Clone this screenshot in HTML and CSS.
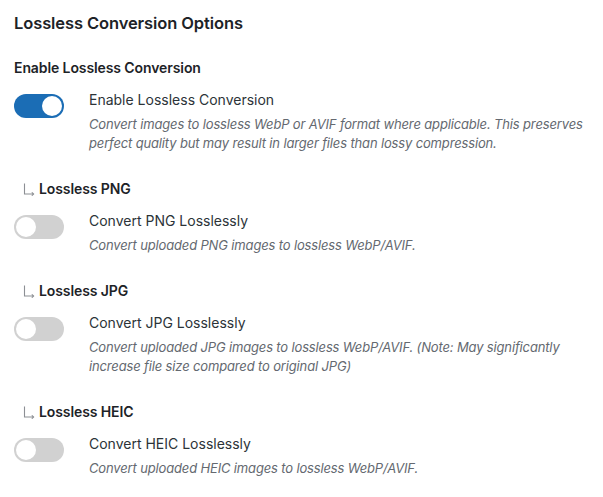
FILE: index.html
```html
<!DOCTYPE html>
<html lang="en">
<head>
<meta charset="utf-8">
<title>Lossless Conversion Options</title>
<link rel="stylesheet" href="styles.css">
</head>
<body>
<div class="page">
  <h2 class="title">Lossless Conversion Options</h2>

  <section class="group">
    <h3 class="group-heading">Enable Lossless Conversion</h3>
    <div class="row">
      <span class="toggle is-on"><span class="knob"></span></span>
      <div class="text">
        <div class="label">Enable Lossless Conversion</div>
        <p class="desc">Convert images to lossless WebP or AVIF format where applicable. This preserves perfect quality but may result in larger files than lossy compression.</p>
      </div>
    </div>
  </section>

  <section class="group">
    <h3 class="group-heading"><svg class="sub-arrow" width="12" height="13" viewBox="0 0 12 13"><path d="M1.5 0.5V11H10.5" fill="none" stroke="#8c8f94" stroke-width="1.1"/><path d="M8.8 9.3L10.6 11L8.8 12.7" fill="none" stroke="#8c8f94" stroke-width="1.1"/></svg>Lossless PNG</h3>
    <div class="row">
      <span class="toggle"><span class="knob"></span></span>
      <div class="text">
        <div class="label">Convert PNG Losslessly</div>
        <p class="desc">Convert uploaded PNG images to lossless WebP/AVIF.</p>
      </div>
    </div>
  </section>

  <section class="group">
    <h3 class="group-heading"><svg class="sub-arrow" width="12" height="13" viewBox="0 0 12 13"><path d="M1.5 0.5V11H10.5" fill="none" stroke="#8c8f94" stroke-width="1.1"/><path d="M8.8 9.3L10.6 11L8.8 12.7" fill="none" stroke="#8c8f94" stroke-width="1.1"/></svg>Lossless JPG</h3>
    <div class="row">
      <span class="toggle"><span class="knob"></span></span>
      <div class="text">
        <div class="label">Convert JPG Losslessly</div>
        <p class="desc">Convert uploaded JPG images to lossless WebP/AVIF. (Note: May significantly increase file size compared to original JPG)</p>
      </div>
    </div>
  </section>

  <section class="group">
    <h3 class="group-heading"><svg class="sub-arrow" width="12" height="13" viewBox="0 0 12 13"><path d="M1.5 0.5V11H10.5" fill="none" stroke="#8c8f94" stroke-width="1.1"/><path d="M8.8 9.3L10.6 11L8.8 12.7" fill="none" stroke="#8c8f94" stroke-width="1.1"/></svg>Lossless HEIC</h3>
    <div class="row">
      <span class="toggle"><span class="knob"></span></span>
      <div class="text">
        <div class="label">Convert HEIC Losslessly</div>
        <p class="desc">Convert uploaded HEIC images to lossless WebP/AVIF.</p>
      </div>
    </div>
  </section>
</div>
</body>
</html>
```

FILE: styles.css
```css
html, body {
  margin: 0;
  padding: 0;
  background: #ffffff;
}

body {
  font-family: Inter, "Noto Sans", "Liberation Sans", sans-serif;
  color: #1d2327;
  -webkit-font-smoothing: antialiased;
}

.page {
  padding: 11px 8px 0 14px;
}

.title {
  margin: 0 0 23px 0;
  font-size: 16.5px;
  line-height: 24px;
  font-weight: 600;
  letter-spacing: -0.1px;
  color: #1d2327;
}

.group {
  margin-bottom: 26px;
}

.group-heading {
  display: flex;
  align-items: center;
  margin: 0 0 12px 0;
  font-size: 14px;
  line-height: 20px;
  font-weight: 600;
  letter-spacing: -0.1px;
  color: #1d2327;
}

.sub-arrow {
  flex: none;
  margin-left: 9px;
  margin-right: 4px;
}

.row {
  display: flex;
  align-items: flex-start;
  gap: 25px;
}

.toggle {
  flex: none;
  position: relative;
  width: 50px;
  height: 24px;
  margin-top: 4px;
  border-radius: 12px;
  background: #d1d1d1;
}

.toggle .knob {
  position: absolute;
  top: 2px;
  left: 2px;
  width: 20px;
  height: 20px;
  border-radius: 50%;
  background: #ffffff;
}

.toggle.is-on {
  background: #1b6db5;
}

.toggle.is-on .knob {
  left: 28px;
}

.text {
  flex: 1;
  min-width: 0;
}

.label {
  font-size: 14px;
  line-height: 20px;
  color: #2c3338;
}

.desc {
  margin: 5px 0 0 0;
  font-size: 13px;
  line-height: 19px;
  font-style: italic;
  letter-spacing: -0.15px;
  color: #646970;
}
```
